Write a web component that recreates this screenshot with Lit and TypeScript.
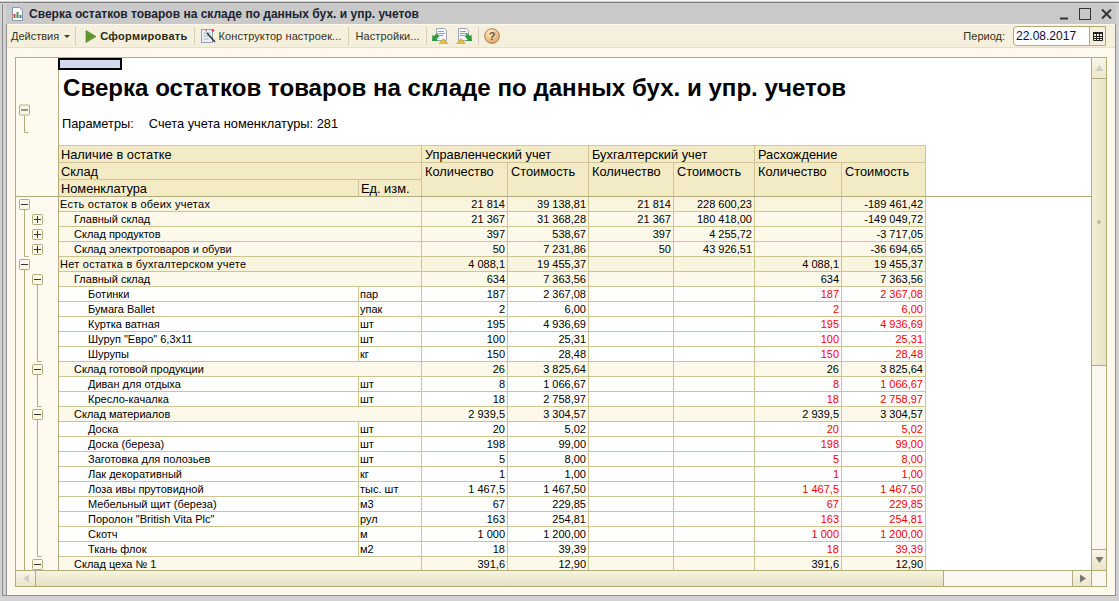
import { LitElement, html, css, svg } from "lit";
import { customElement } from "lit/decorators.js";

type Row = {
  level: 0 | 1 | 2;
  name: string;
  unit?: string;
  q1?: string;
  s1?: string;
  q2?: string;
  s2?: string;
  q3?: string;
  s3?: string;
};

const ROWS: Row[] = [
  { level: 0, name: "Есть остаток в обеих учетах", q1: "21 814", s1: "39 138,81", q2: "21 814", s2: "228 600,23", s3: "-189 461,42" },
  { level: 1, name: "Главный склад", q1: "21 367", s1: "31 368,28", q2: "21 367", s2: "180 418,00", s3: "-149 049,72" },
  { level: 1, name: "Склад продуктов", q1: "397", s1: "538,67", q2: "397", s2: "4 255,72", s3: "-3 717,05" },
  { level: 1, name: "Склад электротоваров и обуви", q1: "50", s1: "7 231,86", q2: "50", s2: "43 926,51", s3: "-36 694,65" },
  { level: 0, name: "Нет остатка в бухгалтерском учете", q1: "4 088,1", s1: "19 455,37", q3: "4 088,1", s3: "19 455,37" },
  { level: 1, name: "Главный склад", q1: "634", s1: "7 363,56", q3: "634", s3: "7 363,56" },
  { level: 2, name: "Ботинки", unit: "пар", q1: "187", s1: "2 367,08", q3: "187", s3: "2 367,08" },
  { level: 2, name: "Бумага Ballet", unit: "упак", q1: "2", s1: "6,00", q3: "2", s3: "6,00" },
  { level: 2, name: "Куртка ватная", unit: "шт", q1: "195", s1: "4 936,69", q3: "195", s3: "4 936,69" },
  { level: 2, name: 'Шуруп "Евро" 6,3х11', unit: "шт", q1: "100", s1: "25,31", q3: "100", s3: "25,31" },
  { level: 2, name: "Шурупы", unit: "кг", q1: "150", s1: "28,48", q3: "150", s3: "28,48" },
  { level: 1, name: "Склад готовой продукции", q1: "26", s1: "3 825,64", q3: "26", s3: "3 825,64" },
  { level: 2, name: "Диван для отдыха", unit: "шт", q1: "8", s1: "1 066,67", q3: "8", s3: "1 066,67" },
  { level: 2, name: "Кресло-качалка", unit: "шт", q1: "18", s1: "2 758,97", q3: "18", s3: "2 758,97" },
  { level: 1, name: "Склад материалов", q1: "2 939,5", s1: "3 304,57", q3: "2 939,5", s3: "3 304,57" },
  { level: 2, name: "Доска", unit: "шт", q1: "20", s1: "5,02", q3: "20", s3: "5,02" },
  { level: 2, name: "Доска (береза)", unit: "шт", q1: "198", s1: "99,00", q3: "198", s3: "99,00" },
  { level: 2, name: "Заготовка для полозьев", unit: "шт", q1: "5", s1: "8,00", q3: "5", s3: "8,00" },
  { level: 2, name: "Лак декоративный", unit: "кг", q1: "1", s1: "1,00", q3: "1", s3: "1,00" },
  { level: 2, name: "Лоза ивы прутовидной", unit: "тыс. шт", q1: "1 467,5", s1: "1 467,50", q3: "1 467,5", s3: "1 467,50" },
  { level: 2, name: "Мебельный щит (береза)", unit: "м3", q1: "67", s1: "229,85", q3: "67", s3: "229,85" },
  { level: 2, name: 'Поролон "British Vita Plc"', unit: "рул", q1: "163", s1: "254,81", q3: "163", s3: "254,81" },
  { level: 2, name: "Скотч", unit: "м", q1: "1 000", s1: "1 200,00", q3: "1 000", s3: "1 200,00" },
  { level: 2, name: "Ткань флок", unit: "м2", q1: "18", s1: "39,39", q3: "18", s3: "39,39" },
  { level: 1, name: "Склад цеха № 1", q1: "391,6", s1: "12,90", q3: "391,6", s3: "12,90" },
];

const LINE = "#b5aa7c";
const BODY_TOP = 139;
const ROW_H = 15;

@customElement("app-root")
export class AppRoot extends LitElement {
  static styles = css`
    :host {
      display: block;
      width: 1119px;
      height: 601px;
      overflow: hidden;
      box-sizing: border-box;
      padding: 3px 3px 0 0;
      background: #d2d2d2;
      border-top: 1px solid #f4f4f4;
      font-family: "Liberation Sans", Arial, sans-serif;
      font-size: 11px;
      color: #000;
      position: relative;
    }
    .rim {
      position: absolute;
      left: 0;
      top: 1px;
      right: 0;
      height: 1px;
      background: #7d7d7d;
    }
    .frame {
      height: 592px;
      box-sizing: border-box;
      margin-left: 2px;
      padding-left: 3px;
      border-left: 1px solid #8a8a8a;
      border-bottom: 1px solid #8f8f8f;
      display: flex;
      flex-direction: column;
    }
    .titlebar {
      height: 20px;
      flex: none;
      display: flex;
      align-items: center;
      padding-left: 5px;
      background: #c9c9c9;
    }
    .titlebar .icon {
      width: 13px;
      height: 14px;
      margin-right: 5px;
      flex: none;
    }
    .caption {
      font-weight: bold;
      font-size: 12px;
      color: #1b2430;
      flex: 1;
      white-space: nowrap;
    }
    .win-btn {
      display: flex;
      gap: 10px;
      margin-right: 4px;
      align-items: center;
    }
    .body {
      flex: 1;
      min-height: 0;
      display: flex;
      flex-direction: column;
      border-left: 1px solid #8f8f8f;
      border-right: 1px solid #8f8f8f;
      background: #fdf9ed;
    }
    .toolbar {
      height: 24px;
      flex: none;
      box-sizing: border-box;
      display: flex;
      align-items: center;
      padding-left: 4px;
      background: #f4f0dd;
      border-top: 1px solid #fbf8ec;
      border-bottom: 1px solid #e6e0c6;
      color: #37321a;
      white-space: nowrap;
    }
    .sep {
      width: 1px;
      height: 18px;
      background: #d9d2b0;
      flex: none;
    }
    .caret {
      width: 0;
      height: 0;
      border: 3px solid transparent;
      border-top: 3px solid #3d3a28;
      border-bottom: 0;
      margin: 1px 5px 0 5px;
    }
    .bold {
      font-weight: bold;
      color: #2e2a12;
      letter-spacing: 0.3px;
    }
    .wide {
      letter-spacing: 0.09px;
    }
    .spacer {
      flex: 1;
    }
    .period {
      margin-right: 8px;
    }
    .date {
      width: 93px;
      height: 20px;
      box-sizing: border-box;
      display: flex;
      border: 1px solid #b5aa7c;
      border-radius: 4px 0 0 4px;
      background: #fff;
      margin-right: 9px;
      font-size: 12px;
      color: #0a0a40;
    }
    .date span {
      flex: 1;
      padding-left: 2px;
      line-height: 18px;
    }
    .date .pick {
      width: 15px;
      flex: none;
      display: flex;
      align-items: center;
      justify-content: center;
      background: #f4f0dd;
      border-left: 1px solid #b5aa7c;
    }
    .panel {
      margin: 9px 8px 0 8px;
      height: 530px;
      flex: none;
      box-sizing: border-box;
      border: 1px solid #b5aa7c;
      background: #fff;
      display: grid;
      grid-template-columns: 1fr 14px;
      grid-template-rows: 512px 16px;
    }
    .view {
      overflow: hidden;
      display: flex;
    }
    .gutter {
      width: 43px;
      box-sizing: border-box;
      flex: none;
      background: #fefaef;
      border-right: 1px solid #b5aa7c;
    }
    .gutter svg {
      display: block;
    }
    .sheet {
      flex: 1;
      min-width: 0;
    }
    .top {
      height: 87px;
      position: relative;
    }
    .sel {
      position: absolute;
      left: -1px;
      top: 0;
      width: 60px;
      height: 8px;
      border: 2px solid #000;
      background: #d4daee;
    }
    h1 {
      margin: 0;
      padding: 16px 0 0 4px;
      font-size: 24.1px;
      line-height: 28px;
      font-weight: bold;
      white-space: nowrap;
    }
    .params {
      position: absolute;
      left: 3px;
      top: 59px;
      font-size: 12.8px;
      line-height: 14px;
      display: flex;
      gap: 15px;
    }
    .head {
      border-bottom: 1px solid #b5aa7c;
    }
    .grid {
      display: grid;
      grid-template-columns: 300px 63px 86px 81px 85px 81px 87px 84px;
      width: 867px;
    }
    .head .grid {
      grid-template-rows: 17px 17px 16px;
      background: #f3ebc6;
      border-top: 1px solid #d3c996;
      font-size: 12.8px;
      line-height: 15px;
    }
    .hc {
      box-sizing: border-box;
      padding: 1px 2px 0;
      border-right: 1px solid #cfc592;
      border-bottom: 1px solid #cfc592;
      white-space: nowrap;
      overflow: hidden;
    }
    .hc.ind {
      padding-left: 3px;
    }
    .hc.last {
      border-bottom: 0;
    }
    .r {
      height: 15px;
      line-height: 14px;
    }
    .c {
      box-sizing: border-box;
      height: 15px;
      border-right: 1px solid #cfc592;
      border-bottom: 1px solid #cfc592;
      padding: 0 2px;
      white-space: nowrap;
      overflow: hidden;
    }
    .unit {
      padding-left: 1px;
    }
    .num {
      text-align: right;
    }
    .l0 .c {
      background: #f9f4de;
    }
    .l1 .c {
      background: #fcf8ea;
    }
    .l2 .c {
      background: #fff;
    }
    .l0 .name {
      grid-column: span 2;
      padding-left: 1px;
      letter-spacing: 0.25px;
    }
    .l1 .name {
      grid-column: span 2;
      padding-left: 15px;
    }
    .l2 .name {
      padding-left: 29px;
    }
    .red {
      color: #f00;
    }
    .vbar {
      border-left: 1px solid #b5aa7c;
      margin-left: -1px;
      display: flex;
      flex-direction: column;
      background: #f9f7ef;
    }
    .sb-btn {
      flex: none;
      display: flex;
      align-items: center;
      justify-content: center;
      background: linear-gradient(#f8f5e6, #ebe6cb);
    }
    .vbar .sb-btn {
      height: 20px;
    }
    .vbar .sb-btn.up {
      border-bottom: 1px solid #b5aa7c;
    }
    .vbar .sb-btn.down {
      border-top: 1px solid #b5aa7c;
      height: 21px;
      box-sizing: border-box;
    }
    .vthumb {
      height: 286px;
      flex: none;
      display: flex;
      align-items: center;
      justify-content: center;
      border-bottom: 1px solid #b5aa7c;
      background: linear-gradient(90deg, #f3efd9, #e8e3c4);
    }
    .dot {
      width: 4px;
      height: 4px;
      border-radius: 50%;
      background: #bdb9a0;
    }
    .vtrack {
      flex: 1;
    }
    .hbar {
      border-top: 1px solid #b5aa7c;
      display: flex;
      background: #f9f7ef;
    }
    .hbar .sb-btn {
      width: 20px;
      box-sizing: border-box;
    }
    .hbar .left {
      border-right: 1px solid #b5aa7c;
    }
    .hthumb {
      width: 908px;
      flex: none;
      box-sizing: border-box;
      border-right: 1px solid #b5aa7c;
      background: linear-gradient(#f6f3e0, #e6e1c2);
    }
    .htrack {
      flex: 1;
    }
    .corner {
      border-top: 1px solid #b5aa7c;
      background: #f9f7ef;
      margin-left: -1px;
      border-left: 1px solid #b5aa7c;
    }
  `;

  private renderGutter() {
    const y = (i: number) => BODY_TOP + i * ROW_H + 7.5;
    const box = (x: number, cy: number, open: boolean) => svg`
      <rect x=${x + 0.5} y=${cy - 5} width="10" height="10" rx="1" fill="#fbf7e6" stroke=${LINE}></rect>
      <path d="M${x + 2} ${cy}h7" stroke="#333" fill="none"></path>
      ${open ? "" : svg`<path d="M${x + 5.5} ${cy - 3.5}v7" stroke="#333" fill="none"></path>`}
    `;
    const tree = (x: number, from: number, to: number) => svg`
      <path d="M${x} ${from}V${to}H${x + 4}" stroke=${LINE} fill="none"></path>
    `;
    const items: unknown[] = [];
    // top-level groups
    items.push(tree(8.5, y(0) + 5, y(3) + 7));
    items.push(tree(8.5, y(4) + 5, 520));
    // second-level groups with open children
    items.push(tree(21.5, y(5) + 5, y(10) + 7));
    items.push(tree(21.5, y(11) + 5, y(13) + 7));
    items.push(tree(21.5, y(14) + 5, y(23) + 7));
    ROWS.forEach((r, i) => {
      if (r.level === 0) items.push(box(3, y(i), true));
      if (r.level === 1) items.push(box(16, y(i), i > 3));
    });
    return html`<svg width="42" height="512" viewBox="0 0 42 512">
      <path d="M0 138.5H42" stroke=${LINE}></path>
      ${tree(8.5, 57.5, 74.5)}
      ${box(3, 52, true)}
      ${items}
    </svg>`;
  }

  private renderRow(r: Row) {
    const red = r.level === 2 ? "red" : "";
    return html`<div class="grid r l${r.level}">
      <div class="c name">${r.name}</div>
      ${r.level === 2 ? html`<div class="c unit">${r.unit}</div>` : ""}
      <div class="c num">${r.q1}</div>
      <div class="c num">${r.s1}</div>
      <div class="c num">${r.q2}</div>
      <div class="c num">${r.s2}</div>
      <div class="c num ${red}">${r.q3}</div>
      <div class="c num ${red}">${r.s3}</div>
    </div>`;
  }

  private docIcon(flip: boolean) {
    return html`<svg width="18" height="16" viewBox="0 0 18 16" style="flex:none">
      ${flip
        ? svg`
          <path d="M2.500 .5h8l2 2v10h-10z" fill="#f4f6fb" stroke="#9aa6b8"></path>
          <path d="M4 3.500h6M4 5.500h7M4 7.500h5" stroke="#8fa0b8"></path>
          <path d="M.5 15.500l4.500-5 4.500 5z" fill="#e8b93a" stroke="#c8993a" stroke-width=".5"></path>
          <path d="M9 5l3 3 1.500-1.500 .5 6.500h-6l1.500-1.500-2.500-3z" transform="translate(2 0)" fill="#2f9a3c"></path>`
        : svg`
          <path d="M5.500 .5h8l2 2v10h-10z" fill="#f4f6fb" stroke="#9aa6b8"></path>
          <path d="M7 3.500h6M7 5.500h7M7 7.500h5" stroke="#8fa0b8"></path>
          <path d="M8 15.500l4.500-5 4.500 5z" fill="#e8b93a" stroke="#c8993a" stroke-width=".5"></path>
          <path d="M6 5L3 8 1.500 6.500 1 13h6L5.500 11.500l2.500-3z" fill="#2f9a3c"></path>`}
    </svg>`;
  }

  render() {
    return html`
      <div class="rim"></div>
      <div class="frame">
        <div class="titlebar">
          <svg class="icon" viewBox="0 0 13 14">
            <path d="M1.500.500h7l3 3v10h-10z" fill="#fff" stroke="#8a97ad"></path>
            <path d="M3.500 11V7" stroke="#d2452f" stroke-width="2"></path>
            <path d="M6.500 11V5" stroke="#3a9a48" stroke-width="2"></path>
            <path d="M9.500 11V8" stroke="#3c6fc0" stroke-width="2"></path>
          </svg>
          <div class="caption">Сверка остатков товаров на складе по данных бух. и упр. учетов</div>
          <div class="win-btn">
            <svg width="10" height="12" viewBox="0 0 10 12"><path d="M1 10.500h8" stroke="#333" stroke-width="2"></path></svg>
            <svg width="12" height="12" viewBox="0 0 12 12"><rect x=".5" y=".5" width="11" height="11" fill="none" stroke="#333"></rect></svg>
            <svg width="11" height="12" viewBox="0 0 11 12"><path d="M1 1.500l9 9M10 1.500l-9 9" stroke="#333" stroke-width="2"></path></svg>
          </div>
        </div>
        <div class="body">
          <div class="toolbar">
            <span>Действия</span>
            <span class="caret"></span>
            <span class="sep"></span>
            <svg width="12" height="13" viewBox="0 0 12 13" style="margin:0 3px 0 9px;flex:none"><path d="M1 .5l10 6-10 6z" fill="#5d9a2c" stroke="#4c7d2a" stroke-width=".6"></path></svg>
            <span class="bold">Сформировать</span>
            <span class="sep" style="margin-left:6px"></span>
            <svg width="16" height="16" viewBox="0 0 16 16" style="margin:0 2px 0 6px;flex:none">
              <rect x=".5" y="1.500" width="11" height="13" fill="#eef2f8" stroke="#8fa0b8"></rect>
              <path d="M2.500 5h7M2.500 8h6M2.500 11h5" stroke="#9db0c8"></path>
              <path d="M6 5l8 9" stroke="#333" stroke-width="1.600"></path>
              <path d="M12 1v3M10.500 2.500h3M5 1.500v2" stroke="#d83a6a"></path>
            </svg>
            <span class="wide">Конструктор настроек...</span>
            <span class="sep" style="margin-left:6px"></span>
            <span class="wide" style="margin-left:7px">Настройки...</span>
            <span class="sep" style="margin-left:6px"></span>
            <span style="margin-left:4px;display:flex">${this.docIcon(false)}</span>
            <span style="margin-left:7px;display:flex">${this.docIcon(true)}</span>
            <span class="sep" style="margin-left:4px"></span>
            <svg width="16" height="16" viewBox="0 0 16 16" style="margin-left:5px;flex:none">
              <defs>
                <radialGradient id="hg" cx=".4" cy=".3" r=".8"><stop offset="0" stop-color="#fdf0d8"></stop><stop offset="1" stop-color="#dd9a52"></stop></radialGradient>
              </defs>
              <circle cx="8" cy="8" r="7.400" fill="url(#hg)" stroke="#b5854f"></circle>
              <text x="8" y="12" text-anchor="middle" font-size="11" font-weight="bold" fill="#7a5020" font-family="Liberation Sans">?</text>
            </svg>
            <span class="spacer"></span>
            <span class="period">Период:</span>
            <div class="date">
              <span>22.08.2017</span>
              <div class="pick">
                <svg width="10" height="9" viewBox="0 0 10 9">
                  <rect width="10" height="2" fill="#222"></rect>
                  <path d="M.5 2v6.500h9V2M3.500 2v7M6.500 2v7M0 4.500h10M0 6.500h10" fill="none" stroke="#222"></path>
                </svg>
              </div>
            </div>
          </div>
          <div class="panel">
            <div class="view">
              <div class="gutter">${this.renderGutter()}</div>
              <div class="sheet">
                <div class="top">
                  <div class="sel"></div>
                  <h1>Сверка остатков товаров на складе по данных бух. и упр. учетов</h1>
                  <div class="params"><span>Параметры:</span><span>Счета учета номенклатуры: 281</span></div>
                </div>
                <div class="head">
                  <div class="grid">
                    <div class="hc" style="grid-column:span 2">Наличие в остатке</div>
                    <div class="hc ind" style="grid-column:span 2">Управленческий учет</div>
                    <div class="hc ind" style="grid-column:span 2">Бухгалтерский учет</div>
                    <div class="hc ind" style="grid-column:span 2">Расхождение</div>
                    <div class="hc" style="grid-column:span 2">Склад</div>
                    ${["Количество", "Стоимость", "Количество", "Стоимость", "Количество", "Стоимость"].map(
                      (t) => html`<div class="hc ind last" style="grid-row:span 2">${t}</div>`
                    )}
                    <div class="hc last">Номенклатура</div>
                    <div class="hc last">Ед. изм.</div>
                  </div>
                </div>
                ${ROWS.map((r) => this.renderRow(r))}
              </div>
            </div>
            <div class="vbar">
              <div class="sb-btn up">
                <svg width="9" height="8" viewBox="0 0 9 8"><path d="M4.500 1l4 6h-8z" fill="#cfcfc6"></path></svg>
              </div>
              <div class="vthumb"><span class="dot"></span></div>
              <div class="vtrack"></div>
              <div class="sb-btn down">
                <svg width="9" height="8" viewBox="0 0 9 8"><path d="M.5 1h8l-4 6z" fill="#77776c"></path></svg>
              </div>
            </div>
            <div class="hbar">
              <div class="sb-btn left">
                <svg width="8" height="9" viewBox="0 0 8 9"><path d="M7 .5v8l-6-4z" fill="#cfcfc6"></path></svg>
              </div>
              <div class="hthumb"></div>
              <div class="htrack"></div>
              <div class="sb-btn" style="border-left:1px solid #b5aa7c">
                <svg width="8" height="9" viewBox="0 0 8 9"><path d="M1 .5v8l6-4z" fill="#77776c"></path></svg>
              </div>
            </div>
            <div class="corner"></div>
          </div>
        </div>
      </div>
    `;
  }
}
